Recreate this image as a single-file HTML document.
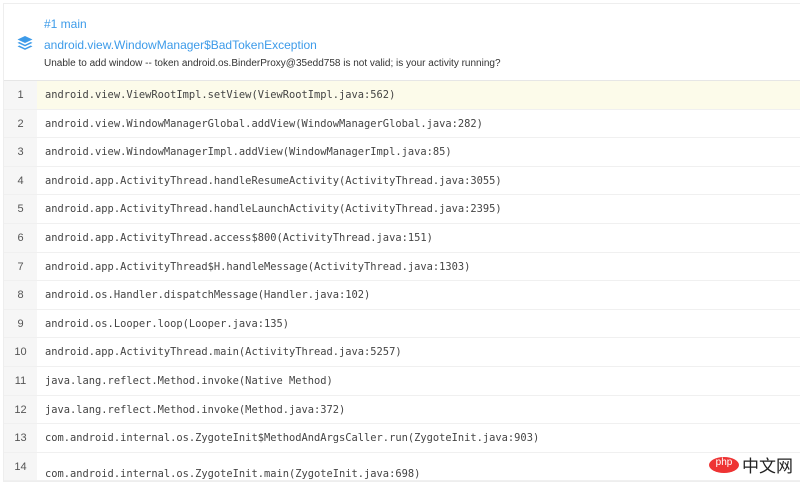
<html><head><style>
body{margin:0;width:800px;height:465px;overflow:hidden;background:#fff;font-family:"Liberation Sans",sans-serif}
.card{position:absolute;left:3px;top:3px;width:800px;border:1px solid #eee}
.hd{height:76px;position:relative;border-bottom:1px solid #e6e6e6}
.t1{position:absolute;left:40px;top:13px;font-size:12px;color:#3d9be9}
.t2{position:absolute;left:40px;top:34px;font-size:12px;color:#3d9be9}
.t3{position:absolute;left:40px;top:54px;font-size:10px;color:#333}
.ic{position:absolute;left:13px;top:31px}
.row{height:28.6px;display:flex;border-bottom:1px solid #f0f0f0;box-sizing:border-box}
.n{width:33px;background:#f6f6f6;text-align:center;font-size:11px;color:#555;line-height:28px;font-family:"Liberation Sans",sans-serif}
.c{padding-left:8px;font-family:"DejaVu Sans Mono","Liberation Mono",monospace;font-size:10.4px;color:#444;line-height:28px;flex:1}
.hl .c{background:#fcfbea}
</style></head><body><div class="card">
<div class="hd">
<svg class="ic" width="16" height="16" viewBox="0 0 16 16"><path d="M8 1L15.5 4.5 8 8 0.5 4.5Z" fill="#3d9be9"/><path d="M2.3 7L0.5 7.9 8 11.4 15.5 7.9 13.7 7 8 9.7Z" fill="#3d9be9"/><path d="M2.3 10.5L0.5 11.4 8 14.9 15.5 11.4 13.7 10.5 8 13.2Z" fill="#3d9be9"/></svg>
<div class="t1">#1 main</div>
<div class="t2">android.view.WindowManager$BadTokenException</div>
<div class="t3">Unable to add window -- token android.os.BinderProxy@35edd758 is not valid; is your activity running?</div>
</div>
<div class="row hl"><div class="n">1</div><div class="c">android.view.ViewRootImpl.setView(ViewRootImpl.java:562)</div></div>
<div class="row"><div class="n">2</div><div class="c">android.view.WindowManagerGlobal.addView(WindowManagerGlobal.java:282)</div></div>
<div class="row"><div class="n">3</div><div class="c">android.view.WindowManagerImpl.addView(WindowManagerImpl.java:85)</div></div>
<div class="row"><div class="n">4</div><div class="c">android.app.ActivityThread.handleResumeActivity(ActivityThread.java:3055)</div></div>
<div class="row"><div class="n">5</div><div class="c">android.app.ActivityThread.handleLaunchActivity(ActivityThread.java:2395)</div></div>
<div class="row"><div class="n">6</div><div class="c">android.app.ActivityThread.access$800(ActivityThread.java:151)</div></div>
<div class="row"><div class="n">7</div><div class="c">android.app.ActivityThread$H.handleMessage(ActivityThread.java:1303)</div></div>
<div class="row"><div class="n">8</div><div class="c">android.os.Handler.dispatchMessage(Handler.java:102)</div></div>
<div class="row"><div class="n">9</div><div class="c">android.os.Looper.loop(Looper.java:135)</div></div>
<div class="row"><div class="n">10</div><div class="c">android.app.ActivityThread.main(ActivityThread.java:5257)</div></div>
<div class="row"><div class="n">11</div><div class="c">java.lang.reflect.Method.invoke(Native Method)</div></div>
<div class="row"><div class="n">12</div><div class="c">java.lang.reflect.Method.invoke(Method.java:372)</div></div>
<div class="row"><div class="n">13</div><div class="c">com.android.internal.os.ZygoteInit$MethodAndArgsCaller.run(ZygoteInit.java:903)</div></div>
<div class="row"><div class="n">14</div><div class="c" style="padding-top:7px">com.android.internal.os.ZygoteInit.main(ZygoteInit.java:698)</div></div>
</div>
<div style="position:absolute;left:709px;top:457px;width:30px;height:16px;border-radius:50%;background:#e33;color:#fff;font-size:10px;text-align:center;line-height:12px">php</div>
<div style="position:absolute;left:742px;top:452px;font-size:17px;color:#222;font-family:'Noto Sans CJK SC',sans-serif">中文网</div>
</body></html>
